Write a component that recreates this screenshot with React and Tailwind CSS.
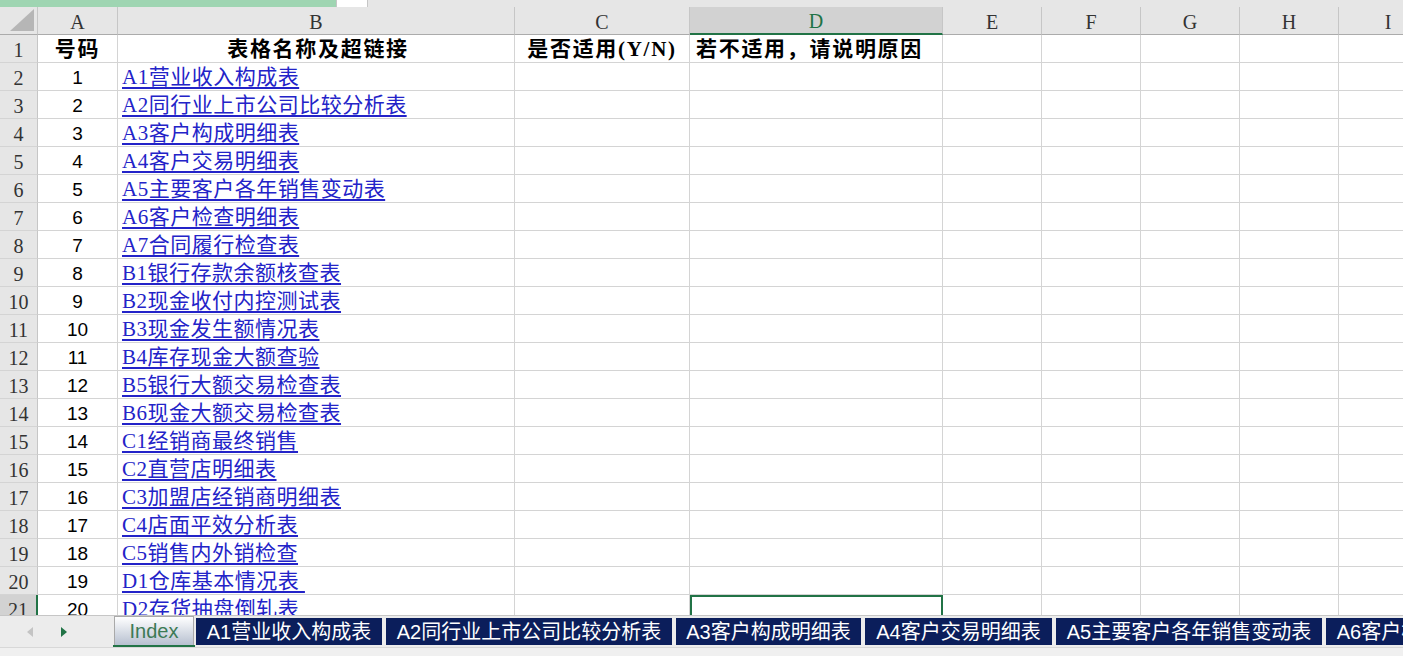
import React from 'react';

const cols = [
  { key: 'A', w: 'w-[80px]' },
  { key: 'B', w: 'w-[397px]' },
  { key: 'C', w: 'w-[175px]' },
  { key: 'D', w: 'w-[253px]' },
  { key: 'E', w: 'w-[99px]' },
  { key: 'F', w: 'w-[99px]' },
  { key: 'G', w: 'w-[99px]' },
  { key: 'H', w: 'w-[99px]' },
  { key: 'I', w: 'w-[99px]' },
];

const links = [
  'A1营业收入构成表',
  'A2同行业上市公司比较分析表',
  'A3客户构成明细表',
  'A4客户交易明细表',
  'A5主要客户各年销售变动表',
  'A6客户检查明细表',
  'A7合同履行检查表',
  'B1银行存款余额核查表',
  'B2现金收付内控测试表',
  'B3现金发生额情况表',
  'B4库存现金大额查验',
  'B5银行大额交易检查表',
  'B6现金大额交易检查表',
  'C1经销商最终销售',
  'C2直营店明细表',
  'C3加盟店经销商明细表',
  'C4店面平效分析表',
  'C5销售内外销检查',
  'D1仓库基本情况表 ',
  'D2存货抽盘倒轧表',
];

const tabs = [
  { t: 'A1营业收入构成表', w: 'w-[186px]' },
  { t: 'A2同行业上市公司比较分析表', w: 'w-[286px]' },
  { t: 'A3客户构成明细表', w: 'w-[185px]' },
  { t: 'A4客户交易明细表', w: 'w-[187px]' },
  { t: 'A5主要客户各年销售变动表', w: 'w-[266px]' },
  { t: 'A6客户检查明细表', w: 'w-[186px]' },
];

const serif = "font-['Liberation_Serif','Noto_Sans_CJK_SC',serif]";
const sans = "font-['Liberation_Sans','Noto_Sans_CJK_SC',sans-serif]";

const Row = ({ n, children, active }) => (
  <div className="flex h-[28px] shrink-0">
    <div
      className={`w-[38px] shrink-0 flex items-center justify-center pt-[3px] border-b border-[#d4d4d4] text-[20px] text-[#333] ${serif} ${
        active ? 'bg-[#d2d2d2] border-r-2 border-r-[#217346]' : 'bg-[#e6e6e6] border-r border-r-[#c6c6c6]'
      }`}
    >
      {n}
    </div>
    {children}
  </div>
);

export default function App() {
  return (
    <div className="w-[1403px] h-[656px] overflow-hidden bg-white flex flex-col">
      {/* top strip */}
      <div className="h-[7px] flex shrink-0 bg-[#e6e6e6]">
        <div className="w-[336px] bg-[#9fd5b2]" />
        <div className="w-[32px] bg-white border-x border-[#c6c6c6]" />
      </div>

      {/* column header */}
      <div className="flex h-[28px] shrink-0 bg-[#e6e6e6]">
        <div className="w-[38px] shrink-0 border-r border-[#c6c6c6] border-b border-b-[#ababab] relative">
          <svg className="absolute right-[3px] bottom-[3px]" width="24" height="22" viewBox="0 0 24 22">
            <polygon points="24,0 24,22 0,22" fill="#b6b6b6" />
          </svg>
        </div>
        {cols.map((c) => (
          <div
            key={c.key}
            className={`${c.w} shrink-0 flex items-center justify-center pt-[2px] text-[20px] ${serif} border-r border-[#c6c6c6] ${
              c.key === 'D'
                ? 'bg-[#d2d2d2] text-[#217346] border-b-2 border-b-[#217346]'
                : 'text-[#333] border-b border-b-[#ababab]'
            }`}
          >
            {c.key}
          </div>
        ))}
      </div>

      {/* rows */}
      <div className="h-[580px] shrink-0 overflow-hidden flex flex-col">
        <Row n={1}>
          {cols.map((c) => (
            <div
              key={c.key}
              className={`${c.w} shrink-0 flex items-center pt-[3px] border-r border-b border-[#d4d4d4] text-[21px] font-bold tracking-[1.7px] text-black whitespace-nowrap ${serif} ${
                c.key === 'D' ? 'justify-start pl-[6px]' : 'justify-center'
              }`}
            >
              {c.key === 'A' && '号码'}
              {c.key === 'B' && <span className="pl-[4px]">表格名称及超链接</span>}
              {c.key === 'C' && '是否适用(Y/N)'}
              {c.key === 'D' && '若不适用，请说明原因'}
            </div>
          ))}
        </Row>
        {links.map((t, i) => (
          <Row key={t} n={i + 2} active={i === 19}>
            {cols.map((c) => {
              if (c.key === 'A')
                return (
                  <div
                    key={c.key}
                    className={`${c.w} shrink-0 flex items-center justify-center pt-[3px] border-r border-b border-[#d4d4d4] text-[19px] text-black ${sans}`}
                  >
                    {i + 1}
                  </div>
                );
              if (c.key === 'B')
                return (
                  <div
                    key={c.key}
                    className={`${c.w} shrink-0 flex items-center pl-[4px] pt-[3px] border-r border-b border-[#d4d4d4] whitespace-pre`}
                  >
                    <a className={`text-[21px] text-[#2323c8] underline underline-offset-[3px] tracking-[0.5px] ${serif}`}>
                      {t}
                    </a>
                  </div>
                );
              if (c.key === 'D' && i === 19)
                return <div key={c.key} className={`${c.w} shrink-0 border-2 border-[#217346]`} />;
              return <div key={c.key} className={`${c.w} shrink-0 border-r border-b border-[#d4d4d4]`} />;
            })}
          </Row>
        ))}
      </div>

      {/* sheet tabs */}
      <div className="h-[32px] shrink-0 flex bg-[#ececec] border-t border-[#c6c6c6]">
        <div className="w-[113px] shrink-0 flex items-center">
          <svg className="ml-[26px]" width="8" height="12" viewBox="0 0 8 12">
            <polygon points="7,1 7,11 1,6" fill="#c4c4c4" />
          </svg>
          <svg className="ml-[26px]" width="8" height="12" viewBox="0 0 8 12">
            <polygon points="1,1 1,11 7,6" fill="#217346" />
          </svg>
        </div>
        <div className="w-[82px] shrink-0 h-[31px] border-b-2 border-[#217346] flex">
          <div className="flex-1 mx-[1px] flex items-center justify-center bg-gradient-to-b from-white to-[#b7c0d0] border border-[#a9a9a9] border-b-0">
            <span className={`text-[20px] text-[#3c7a55] ${sans}`}>Index</span>
          </div>
        </div>
        <div className="flex gap-[4px] pt-[2px] pb-[2px] pl-[1px]">
          {tabs.map((tab) => (
            <div
              key={tab.t}
              className={`${tab.w} shrink-0 bg-[#0b1e5b] text-white text-[20px] ${sans} flex items-center justify-center whitespace-nowrap overflow-hidden`}
            >
              {tab.t}
            </div>
          ))}
        </div>
      </div>
      <div className="flex-1 bg-[#f0f0f0] border-t border-[#d8d8d8]" />
    </div>
  );
}
